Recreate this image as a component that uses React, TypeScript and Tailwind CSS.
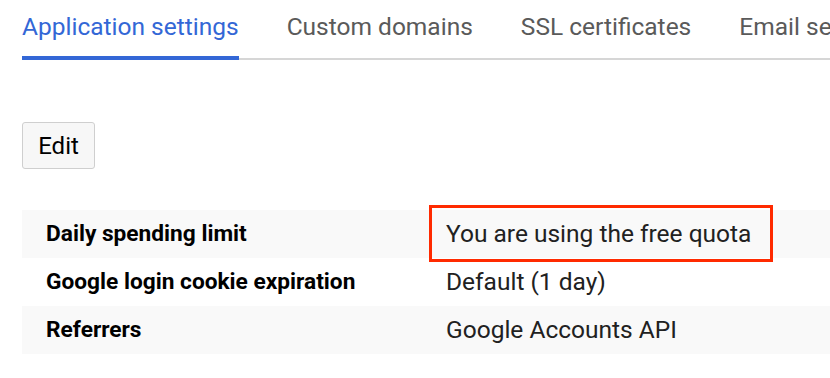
import React from "react";

const rows = [
  { label: "Daily spending limit", value: "You are using the free quota", shaded: true, boxed: true },
  { label: "Google login cookie expiration", value: "Default (1 day)", shaded: false, boxed: false },
  { label: "Referrers", value: "Google Accounts API", shaded: true, boxed: false },
];

export default function App() {
  return (
    <div className="w-[830px] h-[378px] overflow-hidden bg-white pl-[22px]" style={{ fontFamily: "Roboto, 'Noto Sans', sans-serif" }}>
      <div className="flex border-b-2 border-[#d6d6d6] h-[60px] items-end gap-[48px] whitespace-nowrap">
        <div className="border-b-4 border-[#3367d6] text-[#3367d6] text-[24.5px] leading-none pb-[17px] -mb-[2px]">Application settings</div>
        <div className="text-[#5a5a5a] text-[24.5px] leading-none pb-[19px]">Custom domains</div>
        <div className="text-[#5a5a5a] text-[24.5px] leading-none pb-[19px]">SSL certificates</div>
        <div className="text-[#5a5a5a] text-[24.5px] leading-none pb-[19px]">Email settings</div>
      </div>
      <div className="mt-[62px]">
        <button className="h-[47px] w-[73px] rounded-[3px] border border-[#cfcfcf] bg-[#f7f7f7] text-[24px] leading-none text-black">Edit</button>
      </div>
      <div className="mt-[41px]">
        {rows.map((r) => (
          <div key={r.label} className={`relative flex h-[48px] items-center ${r.shaded ? "bg-[#f9f9f9]" : "bg-white"}`}>
            <div className="w-[400px] pl-[24px] text-[22.7px] font-bold text-black">{r.label}</div>
            <div className="pl-[24px] text-[24.5px] text-[#212121]">{r.value}</div>
            {r.boxed && (
              <span className="absolute z-10 left-[407px] -top-[5px] w-[344px] h-[57px] border-[3px] border-[#ff2a00]" />
            )}
          </div>
        ))}
      </div>
    </div>
  );
}
